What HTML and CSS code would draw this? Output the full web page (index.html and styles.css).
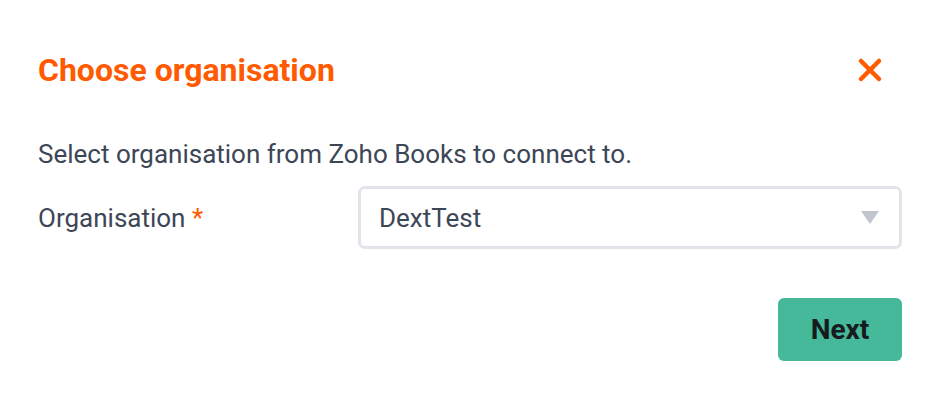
FILE: index.html
```html
<!DOCTYPE html>
<html>
<head>
<meta charset="utf-8">
<link rel="stylesheet" href="styles.css">
</head>
<body>
<div class="dialog">
  <div class="header">
    <h1 class="title">Choose organisation</h1>
    <button class="close" aria-label="Close">
      <svg width="26" height="26" viewBox="0 0 26 26"><path d="M4 4L22 22M22 4L4 22" stroke="#ff5a00" stroke-width="4.5" stroke-linecap="round"/></svg>
    </button>
  </div>
  <p class="desc">Select organisation from Zoho Books to connect to.</p>
  <div class="field">
    <label class="label">Organisation <span class="req">*</span></label>
    <div class="select">
      <span class="value">DextTest</span>
      <span class="arrow"></span>
    </div>
  </div>
  <div class="actions">
    <button class="next">Next</button>
  </div>
</div>
</body>
</html>
```

FILE: styles.css
```css
html, body {
  margin: 0;
  background: #ffffff;
}
body {
  font-family: Roboto, "Liberation Sans", sans-serif;
}
.dialog {
  padding: 50px 41px 0 38px;
}
.header {
  display: flex;
  align-items: center;
  justify-content: space-between;
}
.title {
  margin: 0;
  font-size: 32px;
  font-weight: 700;
  color: #ff5a00;
  line-height: 40px;
}
.close {
  border: 0;
  background: none;
  padding: 0;
  margin-right: 19px;
  display: flex;
}
.desc {
  margin: 49px 0 0;
  font-size: 26px;
  line-height: 30px;
  color: #3d4656;
}
.field {
  margin-top: 17px;
  display: flex;
  align-items: center;
}
.label {
  width: 320px;
  font-size: 26px;
  color: #3d4656;
}
.req {
  color: #ff5a00;
}
.select {
  flex: 1;
  height: 57px;
  border: 3px solid #e2e4ea;
  border-radius: 7px;
  display: flex;
  align-items: center;
  justify-content: space-between;
  padding: 0 20px 0 18px;
}
.value {
  font-size: 26px;
  color: #3d4656;
}
.arrow {
  width: 0;
  height: 0;
  border-left: 9px solid transparent;
  border-right: 9px solid transparent;
  border-top: 13px solid #c1c5cd;
}
.actions {
  display: flex;
  justify-content: flex-end;
  margin-top: 49px;
}
.next {
  width: 124px;
  height: 63px;
  border: 0;
  border-radius: 6px;
  background: #45b99a;
  color: #161b20;
  font-family: Roboto, "Liberation Sans", sans-serif;
  font-size: 28px;
  font-weight: 700;
}
```
